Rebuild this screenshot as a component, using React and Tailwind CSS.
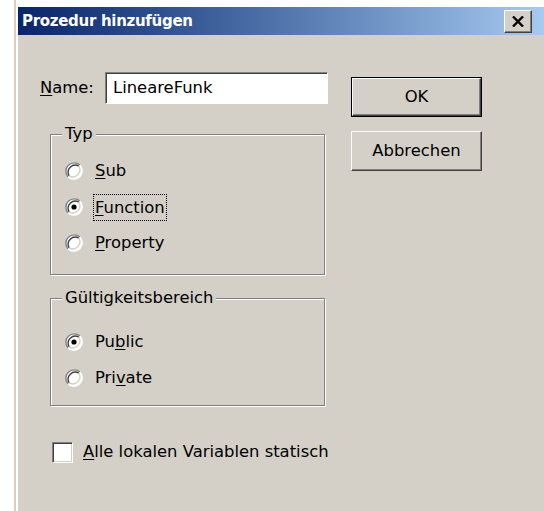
import React from "react";

const face = "font-['DejaVu_Sans',sans-serif]";

// Win2000 radio: sunken circle with optional dot
const Radio = ({ checked }) => (
  <svg width="18" height="18" viewBox="0 0 18 18" className="shrink-0">
    <circle cx="9" cy="9" r="8.5" fill="#fff" />
    <path d="M15 3 A8.5 8.5 0 0 0 3 15" stroke="#808080" strokeWidth="1.4" fill="none" />
    <path d="M13.8 4.2 A7 7 0 0 0 4.2 13.8" stroke="#404040" strokeWidth="1.4" fill="none" />
    <path d="M3 15 A8.5 8.5 0 0 0 15 3" stroke="#fff" strokeWidth="1.4" fill="none" />
    <path d="M4.2 13.8 A7 7 0 0 0 13.8 4.2" stroke="#d4d0c8" strokeWidth="1.4" fill="none" />
    {checked && <circle cx="9" cy="9" r="2.6" fill="#000" />}
  </svg>
);

const Option = ({ checked, focus, children }) => (
  <div className="flex h-[36px] items-center gap-[11px] pl-[14px]">
    <Radio checked={checked} />
    <span
      className={
        focus
          ? "px-px leading-[25px] outline-1 outline-dotted outline-black"
          : "px-px"
      }
    >
      {children}
    </span>
  </div>
);

const Group = ({ title, children, className }) => (
  <div
    className={`relative ml-[10px] w-[275px] border border-[#808080] shadow-[inset_1px_1px_0_#fff,1px_1px_0_#fff] ${className}`}
  >
    <span className="absolute -top-[11px] left-[11px] bg-[#d4d0c8] px-[3px] leading-[20px]">
      {title}
    </span>
    {children}
  </div>
);

const Button = ({ primary, children }) => (
  <div
    className={`flex h-[40px] w-[131px] items-center justify-center ${
      primary ? "border border-black" : ""
    }`}
  >
    <div className="flex h-full w-full items-center justify-center border-t border-l border-t-white border-l-white border-r border-b border-r-[#404040] border-b-[#404040] shadow-[inset_-1px_-1px_0_#808080]">
      {children}
    </div>
  </div>
);

export default function App() {
  return (
    <div className={`flex h-[511px] w-[544px] bg-white text-[16.4px] text-black ${face}`}>
      <div className="ml-[14px] flex flex-1 border-l-2 border-[#d4d0c8]">
        <div className="flex flex-1 flex-col border-l-2 border-white pt-[7px]">
          {/* title bar */}
          <div className="flex h-[28px] items-center justify-between bg-gradient-to-r from-[#0a246a] to-[#a6caf0] pl-[4px] pr-[12px]">
            <span className="text-[15px] font-bold tracking-[-0.3px] text-white">Prozedur hinzufügen</span>
            <div className="flex h-[23px] w-[28px] items-center justify-center border-t border-l border-white border-r border-b border-r-[#404040] border-b-[#404040] bg-[#d4d0c8] shadow-[inset_-1px_-1px_0_#808080]">
              <svg width="12" height="11" viewBox="0 0 12 11">
                <path d="M1 0.5 L11 10.5 M11 0.5 L1 10.5" stroke="#000" strokeWidth="2.4" />
              </svg>
            </div>
          </div>

          {/* dialog body */}
          <div className="flex flex-1 gap-[23px] bg-[#d4d0c8] pl-[22px] pt-[37px]">
            <div className="flex w-[288px] flex-col">
              <div className="flex h-[32px] items-center">
                <span className="w-[65px]">
                  <span className="underline underline-offset-2">N</span>ame:
                </span>
                <div className="flex h-[32px] w-[223px] items-center border-t border-l border-[#808080] border-r border-b border-r-white border-b-white bg-white pl-[7px] shadow-[inset_1px_1px_0_#404040]">
                  LineareFunk
                </div>
              </div>

              <Group title="Typ" className="mt-[30px] h-[141px] pt-[18px]">
                <Option>
                  <span className="underline underline-offset-2">S</span>ub
                </Option>
                <Option checked focus>
                  <span className="underline underline-offset-2">F</span>unction
                </Option>
                <Option>
                  <span className="underline underline-offset-2">P</span>roperty
                </Option>
              </Group>

              <Group title="Gültigkeitsbereich" className="mt-[23px] h-[108px] pt-[25px]">
                <Option checked>
                  Pu<span className="underline underline-offset-2">b</span>lic
                </Option>
                <Option>
                  Pri<span className="underline underline-offset-2">v</span>ate
                </Option>
              </Group>

              <div className="mt-[34px] flex items-center gap-[10px] pl-[12px]">
                <div className="h-[21px] w-[21px] shrink-0 border-t border-l border-[#808080] border-r border-b border-r-white border-b-white bg-white shadow-[inset_1px_1px_0_#404040,inset_-1px_-1px_0_#d4d0c8]" />
                <span className="whitespace-nowrap">
                  <span className="underline underline-offset-2">A</span>lle lokalen Variablen statisch
                </span>
              </div>
            </div>

            <div className="flex flex-col gap-[14px] pt-[5px]">
              <Button primary>OK</Button>
              <Button>Abbrechen</Button>
            </div>
          </div>
        </div>
      </div>
    </div>
  );
}
